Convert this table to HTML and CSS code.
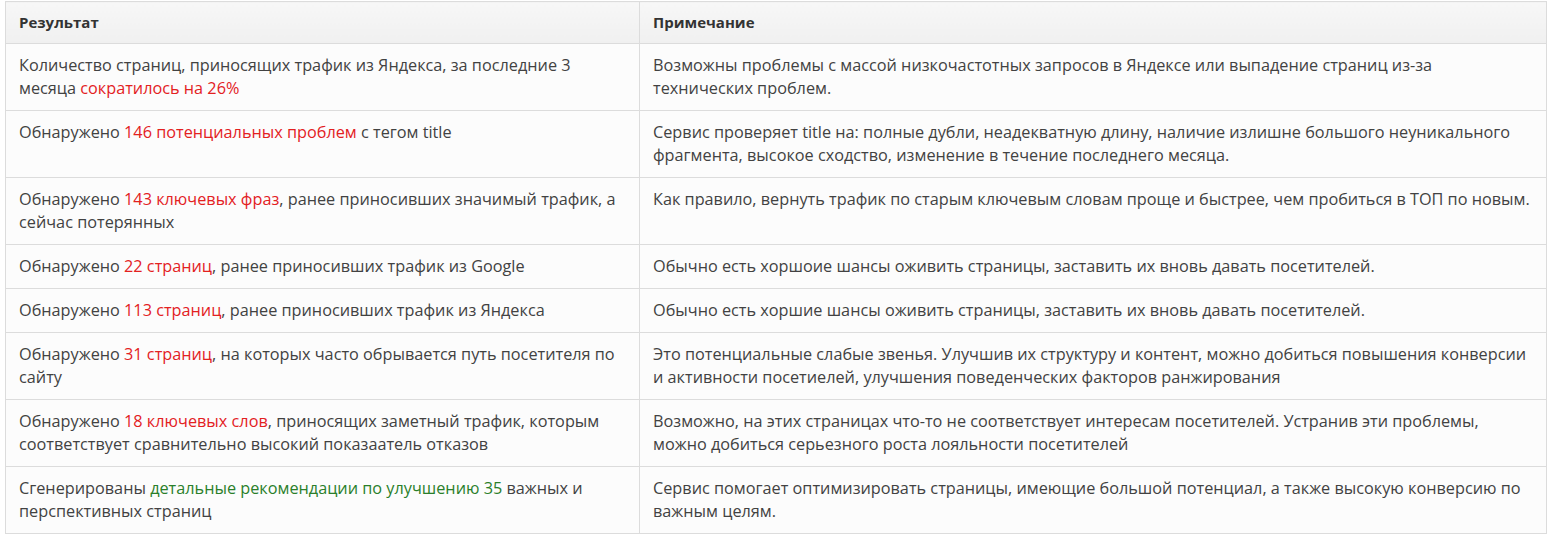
FILE: index.html
```html
<!DOCTYPE html>
<html lang="ru">
<head>
<meta charset="utf-8">
<link rel="stylesheet" href="styles.css">
</head>
<body>
<table class="report">
  <thead>
    <tr><th class="c1">Результат</th><th>Примечание</th></tr>
  </thead>
  <tbody>
    <tr>
      <td>Количество страниц, приносящих трафик из Яндекса, за последние 3 месяца <span class="bad">сократилось на 26%</span></td>
      <td>Возможны проблемы с массой низкочастотных запросов в Яндексе или выпадение страниц из-за технических проблем.</td>
    </tr>
    <tr>
      <td>Обнаружено <span class="bad">146 потенциальных проблем</span> с тегом title</td>
      <td>Сервис проверяет title на: полные дубли, неадекватную длину, наличие излишне большого неуникального фрагмента, высокое сходство, изменение в течение последнего месяца.</td>
    </tr>
    <tr>
      <td>Обнаружено <span class="bad">143 ключевых фраз</span>, ранее приносивших значимый трафик, а сейчас потерянных</td>
      <td><span class="tight">Как правило, вернуть трафик по старым ключевым словам проще и быстрее, чем пробиться в ТОП по новым.</span></td>
    </tr>
    <tr>
      <td>Обнаружено <span class="bad">22 страниц</span>, ранее приносивших трафик из Google</td>
      <td>Обычно есть хоршоие шансы оживить страницы, заставить их вновь давать посетителей.</td>
    </tr>
    <tr>
      <td>Обнаружено <span class="bad">113 страниц</span>, ранее приносивших трафик из Яндекса</td>
      <td>Обычно есть хоршие шансы оживить страницы, заставить их вновь давать посетителей.</td>
    </tr>
    <tr>
      <td>Обнаружено <span class="bad">31 страниц</span>, на которых часто обрывается путь посетителя по сайту</td>
      <td>Это потенциальные слабые звенья. Улучшив их структуру и контент, можно добиться повышения конверсии и активности посетиелей, улучшения поведенческих факторов ранжирования</td>
    </tr>
    <tr>
      <td>Обнаружено <span class="bad">18 ключевых слов</span>, приносящих заметный трафик, которым соответствует сравнительно высокий показаатель отказов</td>
      <td>Возможно, на этих страницах что-то не соответствует интересам посетителей. Устранив эти проблемы, можно добиться серьезного роста лояльности посетителей</td>
    </tr>
    <tr>
      <td>Сгенерированы <span class="good">детальные рекомендации по улучшению 35</span> важных и перспективных страниц</td>
      <td>Сервис помогает оптимизировать страницы, имеющие большой потенциал, а также высокую конверсию по важным целям.</td>
    </tr>
  </tbody>
</table>
</body>
</html>
```

FILE: styles.css
```css
html, body {
  margin: 0;
  padding: 0;
  background: #ffffff;
}
body {
  padding: 1px 0 0 5px;
  font-family: "Open Sans", "Noto Sans", sans-serif;
  color: #424242;
}
.report {
  width: 1542px;
  border-collapse: collapse;
  table-layout: fixed;
  background: #fcfcfc;
  border: 1px solid #dcdcdc;
}
.report th, .report td {
  border: 1px solid #dcdcdc;
  text-align: left;
  vertical-align: top;
  padding: 10px 13px;
}
.report th {
  font-size: 15px;
  font-weight: 700;
  line-height: 21px;
  color: #333;
  background: linear-gradient(#f7f7f7, #f0f0f0);
}
.report th.c1 {
  width: 607px;
}
.report td {
  font-size: 16.25px;
  line-height: 23px;
}
.bad { color: #e3211f; }
.good { color: #2a7f2a; }
.tight { white-space: nowrap; }
```
